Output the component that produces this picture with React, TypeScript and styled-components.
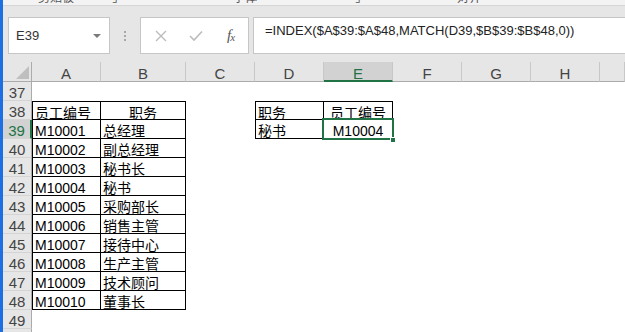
import React from "react";
import styled, { createGlobalStyle } from "styled-components";

const GlobalStyle = createGlobalStyle`
  html, body {
    margin: 0;
    padding: 0;
    background: #ffffff;
  }
  body {
    font-family: "Liberation Sans", "Noto Sans CJK SC", sans-serif;
    overflow: hidden;
  }
`;

const GREEN = "#217346";

// columns A..I, row header first
const COLS = ["A", "B", "C", "D", "E", "F", "G", "H", "I"];
const ROWS = [37, 38, 39, 40, 41, 42, 43, 44, 45, 46, 47, 48, 49, 50];

type Cell = { text: string; align?: "left" | "center" };

// sheet content keyed by "A38"
const data: Record<string, Cell> = {
  A38: { text: "员工编号" },
  B38: { text: "职务", align: "center" },
  D38: { text: "职务" },
  E38: { text: "员工编号", align: "center" },
  D39: { text: "秘书" },
  E39: { text: "M10004", align: "center" },
};

const staff = [
  ["M10001", "总经理"],
  ["M10002", "副总经理"],
  ["M10003", "秘书长"],
  ["M10004", "秘书"],
  ["M10005", "采购部长"],
  ["M10006", "销售主管"],
  ["M10007", "接待中心"],
  ["M10008", "生产主管"],
  ["M10009", "技术顾问"],
  ["M10010", "董事长"],
];
staff.forEach(([id, job], i) => {
  data["A" + (39 + i)] = { text: id };
  data["B" + (39 + i)] = { text: job };
});

// which cells carry the black table border
function boxed(col: string, row: number) {
  if ((col === "A" || col === "B") && row >= 38 && row <= 48) return true;
  if ((col === "D" || col === "E") && row >= 38 && row <= 39) return true;
  return false;
}

const Window = styled.div`
  width: 625px;
  height: 332px;
  overflow: hidden;
  display: flex;
  background: #ffffff;
`;

const Edge = styled.div`
  width: 3px;
  flex: none;
  background: #1d6fe3;
`;

const Main = styled.div`
  flex: 1;
  min-width: 0;
  display: flex;
  flex-direction: column;
`;

const Ribbon = styled.div`
  height: 5px;
  flex: none;
  overflow: hidden;
  display: flex;
  align-items: flex-start;
  background: #f3f3f3;
  border-bottom: 1px solid #d6d6d6;
`;

const RibbonFrag = styled.span<{ $gap: number }>`
  margin-left: ${(p) => p.$gap}px;
  margin-top: -8px;
  font-size: 12px;
  line-height: 12px;
  color: #555;
  white-space: nowrap;
`;

const FormulaBar = styled.div`
  height: 56px;
  flex: none;
  display: flex;
  align-items: flex-start;
  padding: 11px 0 0 5px;
  box-sizing: border-box;
  background: #e6e6e6;
`;

const NameBox = styled.div`
  width: 102px;
  height: 37px;
  flex: none;
  box-sizing: border-box;
  display: flex;
  align-items: center;
  justify-content: space-between;
  padding: 0 8px 0 7px;
  background: #ffffff;
  border: 1px solid #c6c6c6;
  font-size: 13px;
  color: #333;
`;

const Caret = styled.span`
  width: 0;
  height: 0;
  border-left: 4px solid transparent;
  border-right: 4px solid transparent;
  border-top: 4px solid #7a7a7a;
`;

const Grip = styled.div`
  width: 30px;
  height: 37px;
  flex: none;
  display: flex;
  flex-direction: column;
  align-items: center;
  justify-content: center;
  gap: 2px;
`;

const GripDot = styled.span`
  width: 2px;
  height: 2px;
  background: #a8a8a8;
`;

const ButtonBox = styled.div`
  width: 109px;
  height: 37px;
  flex: none;
  box-sizing: border-box;
  display: flex;
  align-items: center;
  padding-left: 2px;
  background: #ffffff;
  border: 1px solid #c6c6c6;
`;

const BarButton = styled.span`
  width: 35px;
  display: flex;
  align-items: center;
  justify-content: center;
`;

const Fx = styled.span`
  font-family: "Liberation Serif", "DejaVu Serif", serif;
  font-style: italic;
  font-size: 15px;
  color: #555;
  letter-spacing: -1px;

  sub {
    font-size: 11px;
    vertical-align: -1px;
  }
`;

const FormulaBox = styled.div`
  flex: 1;
  min-width: 0;
  height: 37px;
  margin-left: 4px;
  box-sizing: border-box;
  padding: 4px 0 0 11px;
  background: #ffffff;
  border: 1px solid #c6c6c6;
  border-right: none;
  font-size: 13px;
  line-height: 18px;
  color: #222;
  white-space: nowrap;
  overflow: hidden;
`;

const Sheet = styled.div`
  flex: 1;
  display: grid;
  grid-template-columns: 29px 69px 85px 69px 69px 69px 69px 69px 69px 1fr;
  grid-template-rows: 20px repeat(14, 19px);
  background: #ffffff;
`;

const Corner = styled.div`
  box-sizing: border-box;
  display: flex;
  align-items: flex-end;
  justify-content: flex-end;
  padding: 0 2px 2px 0;
  background: #e6e6e6;
  border-right: 1px solid #ababab;
  border-bottom: 1px solid #ababab;
`;

const CornerMark = styled.span`
  width: 0;
  height: 0;
  border-left: 13px solid transparent;
  border-bottom: 13px solid #bfbfbf;
`;

const ColHead = styled.div<{ $active?: boolean }>`
  box-sizing: border-box;
  padding-top: 3px;
  text-align: center;
  font-size: 15px;
  line-height: 18px;
  background: ${(p) => (p.$active ? "#d2d2d2" : "#e6e6e6")};
  color: ${(p) => (p.$active ? GREEN : "#444")};
  border-right: 1px solid #c8c8c8;
  border-bottom: ${(p) => (p.$active ? `2px solid ${GREEN}` : "1px solid #ababab")};
`;

const RowHead = styled.div<{ $active?: boolean }>`
  box-sizing: border-box;
  padding-top: 2px;
  text-align: center;
  font-size: 15px;
  line-height: 18px;
  background: ${(p) => (p.$active ? "#d2d2d2" : "#e6e6e6")};
  color: ${(p) => (p.$active ? GREEN : "#444")};
  border-right: ${(p) => (p.$active ? `2px solid ${GREEN}` : "1px solid #ababab")};
  border-bottom: 1px solid #d4d4d4;
`;

const DataCell = styled.div<{
  $boxed: boolean;
  $top: boolean;
  $left: boolean;
  $align: string;
}>`
  position: relative;
  box-sizing: border-box;
  padding: 2px 2px 0 2px;
  font-size: 14px;
  line-height: 18px;
  color: #000;
  white-space: nowrap;
  text-align: ${(p) => p.$align};
  border-right: 1px solid ${(p) => (p.$boxed ? "#000" : "transparent")};
  border-bottom: 1px solid ${(p) => (p.$boxed ? "#000" : "transparent")};
  border-top: ${(p) => (p.$top ? "1px solid #000" : "none")};
  border-left: ${(p) => (p.$left ? "1px solid #000" : "none")};
`;

const Selection = styled.div`
  position: absolute;
  top: -2px;
  left: -2px;
  right: -2px;
  bottom: -2px;
  border: 2px solid ${GREEN};
  z-index: 2;
  pointer-events: none;
`;

const FillHandle = styled.span`
  position: absolute;
  right: -4px;
  bottom: -5px;
  width: 6px;
  height: 6px;
  box-sizing: border-box;
  background: ${GREEN};
  border: 1px solid #ffffff;
`;

const SELECTED = "E39";

export default function App() {
  return (
    <>
      <GlobalStyle />
      <Window>
        <Edge />
        <Main>
          <Ribbon>
            <RibbonFrag $gap={35}>剪贴板</RibbonFrag>
            <RibbonFrag $gap={38}>⌟</RibbonFrag>
            <RibbonFrag $gap={115}>字体</RibbonFrag>
            <RibbonFrag $gap={98}>⌟</RibbonFrag>
            <RibbonFrag $gap={96}>对齐</RibbonFrag>
          </Ribbon>

          <FormulaBar>
            <NameBox>
              <span>E39</span>
              <Caret />
            </NameBox>
            <Grip>
              <GripDot />
              <GripDot />
              <GripDot />
            </Grip>
            <ButtonBox>
              <BarButton>
                <svg width="12" height="12" viewBox="0 0 12 12">
                  <path d="M1 1 L11 11 M11 1 L1 11" stroke="#bcbcbc" strokeWidth="1.4" fill="none" />
                </svg>
              </BarButton>
              <BarButton>
                <svg width="14" height="12" viewBox="0 0 14 12">
                  <path d="M1 6 L5 10 L13 1.5" stroke="#bcbcbc" strokeWidth="1.6" fill="none" />
                </svg>
              </BarButton>
              <BarButton>
                <Fx>
                  f<sub>x</sub>
                </Fx>
              </BarButton>
            </ButtonBox>
            <FormulaBox>=INDEX($A$39:$A$48,MATCH(D39,$B$39:$B$48,0))</FormulaBox>
          </FormulaBar>

          <Sheet>
            <Corner>
              <CornerMark />
            </Corner>
            {COLS.map((c) => (
              <ColHead key={c} $active={c === "E"}>
                {c === "I" ? "" : c}
              </ColHead>
            ))}
            {ROWS.map((r) => (
              <React.Fragment key={r}>
                <RowHead $active={r === 39}>{r}</RowHead>
                {COLS.map((c) => {
                  const id = c + r;
                  const cell = data[id];
                  const isBoxed = boxed(c, r);
                  return (
                    <DataCell
                      key={id}
                      $boxed={isBoxed}
                      $top={isBoxed && r === 38}
                      $left={isBoxed && (c === "A" || c === "D")}
                      $align={cell?.align ?? "left"}
                    >
                      {cell?.text}
                      {id === SELECTED && (
                        <Selection>
                          <FillHandle />
                        </Selection>
                      )}
                    </DataCell>
                  );
                })}
              </React.Fragment>
            ))}
          </Sheet>
        </Main>
      </Window>
    </>
  );
}
